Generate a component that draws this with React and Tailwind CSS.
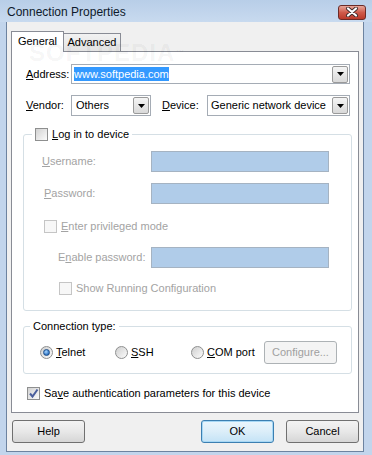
import React from "react";

const font = "font-['Liberation_Sans',Arial,sans-serif]";

function DropBtn() {
  return (
    <span className="ml-auto mr-px w-[16px] h-[17px] border border-[#9a9a9a] rounded-[2px] bg-linear-to-b from-[#f5f5f5] to-[#d9d9d9] flex items-center justify-center shrink-0">
      <svg width="7" height="4" viewBox="0 0 7 4">
        <path d="M0 0h7L3.5 4z" fill="#000" />
      </svg>
    </span>
  );
}

function Check({ checked, disabled }) {
  return (
    <span
      className={`w-[13px] h-[13px] border flex items-center justify-center shrink-0 ${
        disabled
          ? "border-[#c5c5c5] bg-[#f7f7f7]"
          : "border-[#8e8f8f] bg-linear-to-br from-[#d2d2d2] to-[#fbfbfb]"
      }`}
    >
      {checked && (
        <svg width="11" height="11" viewBox="0 0 11 11">
          <path d="M2 5.5 L4.5 8.5 L9.5 1.5" fill="none" stroke="#4b5f9c" strokeWidth="2" />
        </svg>
      )}
    </span>
  );
}

function Radio({ checked }) {
  return (
    <span className="w-[13px] h-[13px] rounded-full border border-[#8e8f8f] bg-linear-to-br from-[#cfcfcf] to-[#fcfcfc] flex items-center justify-center shrink-0">
      {checked && (
        <span className="w-[7px] h-[7px] rounded-full border border-[#1e4f8a] bg-[radial-gradient(circle_at_40%_35%,#a8d6ff,#3479c7_65%,#1b4a85)]" />
      )}
    </span>
  );
}

function Field() {
  return <span className="w-[178px] h-[21px] border border-[#a5b3c2] bg-[#b0cce9]" />;
}

function Button({ children, primary, disabled, cls }) {
  let look = "border-[#707070] text-black bg-linear-to-b from-[#f3f3f3] via-[#e8e8e8] to-[#d6d6d6]";
  if (primary) look = "border-[#3c7fb1] text-black bg-linear-to-b from-[#eaf6fd] via-[#dceef9] to-[#c4e3f6] shadow-[inset_0_0_0_1px_#a7d8f5]";
  if (disabled) look = "border-[#adb2b5] text-[#a0a0a0] bg-[#f4f4f4]";
  return (
    <span className={`h-[23px] rounded-[3px] border flex items-center justify-center text-[11px] ${look} ${cls}`}>
      {children}
    </span>
  );
}

export default function App() {
  return (
    <div className={`${font} w-[372px] h-[455px] flex flex-col bg-[#c2d5ec] text-[11px] leading-[13px] text-black select-none`}>
      {/* title bar */}
      <div className="h-[22px] flex items-center pl-[7px] pr-[6px] bg-linear-to-b from-[#b8cee8] to-[#c8daef]">
        <span className="text-[12px] pt-[2px] text-[#0e1a2b]">Connection Properties</span>
        <span className="ml-auto w-[28px] h-[15px] mt-[2px] rounded-[3px] border border-[#6b2b27] bg-linear-to-b from-[#e6a599] via-[#cf5b4b] to-[#bb3a2a] flex items-center justify-center">
          <svg width="14" height="10" viewBox="0 0 14 10">
            <path d="M3 1.5 L11 8.5 M11 1.5 L3 8.5" stroke="#3d2a2a" strokeWidth="4" strokeLinecap="round" />
            <path d="M3 1.5 L11 8.5 M11 1.5 L3 8.5" stroke="#fff" strokeWidth="2.2" strokeLinecap="round" />
          </svg>
        </span>
      </div>

      {/* client area */}
      <div className="relative flex-1 ml-[6px] mr-[8px] mb-[3px] border border-t-0 border-[#6d83a0] bg-[#f0f0f0] flex flex-col">
        {/* tabs */}
        <div className="mt-[9px] pl-[4px] h-[20px] flex items-end">
          <span className="relative z-10 -mb-px w-[53px] h-[21px] border border-b-0 border-[#898c95] bg-white flex items-center justify-center pb-[1px]">
            General
          </span>
          <span className="w-[57px] h-[18px] border border-l-0 border-b-0 border-[#898c95] bg-linear-to-b from-[#f2f2f2] to-[#e3e3e3] flex items-center justify-center">
            Advanced
          </span>
        </div>

        {/* panel */}
        <div className="mx-[4px] h-[362px] border border-[#898c95] bg-white flex flex-col">
          <div className="mt-[12px] pl-[14px] flex items-center h-[20px]">
            <span className="w-[45px]"><u>A</u>ddress:</span>
            <span className="w-[279px] h-[20px] border border-[#a5acb5] flex items-center pl-[2px]">
              <span className="bg-[#3399ff] text-white leading-[14px]">www.softpedia.com</span>
              <DropBtn />
            </span>
          </div>

          <div className="mt-[11px] pl-[14px] flex items-center h-[21px]">
            <span className="w-[45px]"><u>V</u>endor:</span>
            <span className="w-[80px] h-[21px] border border-[#a5acb5] flex items-center pl-[4px]">
              Others
              <DropBtn />
            </span>
            <span className="ml-[11px] w-[45px]"><u>D</u>evice:</span>
            <span className="w-[143px] h-[21px] border border-[#a5acb5] flex items-center pl-[3px]">
              Generic network device
              <DropBtn />
            </span>
          </div>

          {/* login group */}
          <div className="relative mt-[18px] ml-[11px] w-[329px] h-[177px] border border-[#d5dfe5] rounded-[3px] flex flex-col text-[#a3a3a3]">
            <span className="absolute -top-[7px] left-[8px] px-[3px] bg-white flex items-center gap-[4px] text-black">
              <Check />
              <span><u>L</u>og in to device</span>
            </span>
            <div className="mt-[16px] pl-[18px] flex items-center">
              <span className="w-[109px]"><u>U</u>sername:</span>
              <Field />
            </div>
            <div className="mt-[11px] pl-[18px] flex items-center">
              <span className="w-[109px] pl-[2px]"><u>P</u>assword:</span>
              <Field />
            </div>
            <div className="mt-[16px] pl-[20px] flex items-center gap-[4px] h-[13px]">
              <Check disabled />
              <span><u>E</u>nter privileged mode</span>
            </div>
            <div className="mt-[14px] pl-[34px] flex items-center">
              <span className="w-[93px]">E<u>n</u>able password:</span>
              <Field />
            </div>
            <div className="mt-[14px] pl-[35px] flex items-center gap-[4px] h-[13px]">
              <Check disabled />
              <span>Show Running Configuration</span>
            </div>
          </div>

          {/* connection type group */}
          <div className="relative mt-[15px] ml-[11px] w-[329px] h-[48px] border border-[#d5dfe5] rounded-[3px] flex items-start">
            <span className="absolute -top-[7px] left-[6px] px-[3px] bg-white">Connection type:</span>
            <div className="mt-[14px] pl-[16px] flex items-center h-[22px]">
              <span className="w-[75px] flex items-center gap-[3px]">
                <Radio checked />
                <span><u>T</u>elnet</span>
              </span>
              <span className="w-[76px] flex items-center gap-[3px]">
                <Radio />
                <span><u>S</u>SH</span>
              </span>
              <span className="w-[73px] flex items-center gap-[3px]">
                <Radio />
                <span><u>C</u>OM port</span>
              </span>
              <Button disabled cls="w-[73px] h-[22px]">Confi<u>g</u>ure...</Button>
            </div>
          </div>

          <div className="mt-[13px] pl-[15px] flex items-center gap-[4px] h-[13px]">
            <Check checked />
            <span>Sa<u>v</u>e authentication parameters for this device</span>
          </div>
        </div>

        {/* buttons */}
        <div className="mt-[7px] pl-[5px] pr-[4px] flex items-center">
          <Button cls="w-[73px]">Help</Button>
          <Button primary cls="ml-auto w-[73px]">OK</Button>
          <Button cls="ml-[12px] w-[73px]">Cancel</Button>
        </div>

        {/* watermark */}
        <span className="pointer-events-none absolute top-[19px] left-[22px] z-20 text-[24px] leading-[24px] tracking-[1px] text-black/[0.05] font-bold">
          SOFTPEDIA<span className="text-[9px] align-top">™</span>
        </span>
      </div>
    </div>
  );
}
